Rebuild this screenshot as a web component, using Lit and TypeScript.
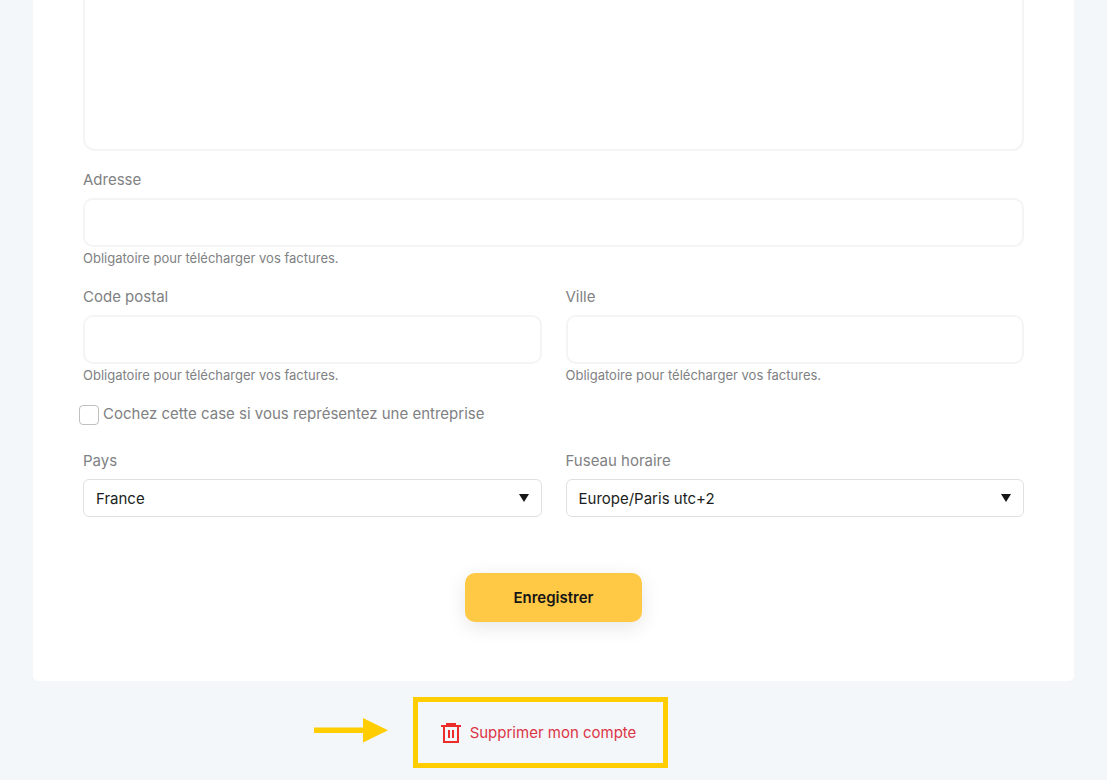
import { LitElement, html, css } from "lit";
import { customElement } from "lit/decorators.js";

@customElement("app-root")
export class AppRoot extends LitElement {
  static styles = css`
    :host {
      display: block;
      min-height: 100vh;
      background: #f3f7fa;
      color: #808183;
      font-family: Inter, "Open Sans", sans-serif;
      font-size: 15px;
      line-height: 24px;
    }
    * {
      box-sizing: border-box;
    }
    .card {
      display: flex;
      flex-direction: column;
      gap: 16px;
      margin: 0 33px;
      padding: 0 50px 59px;
      background: #fff;
      border-radius: 0 0 5px 5px;
    }
    .field {
      display: flex;
      flex-direction: column;
      min-width: 0;
    }
    .row {
      display: grid;
      grid-template-columns: 1fr 1fr;
      gap: 24px;
    }
    .label {
      margin-bottom: 6px;
    }
    .control {
      width: 100%;
      height: 49px;
      padding: 0 16px;
      border: 2px solid #f4f4f4;
      border-radius: 10px;
      background: #fff;
      color: #161616;
      font: inherit;
    }
    .area {
      display: block;
      height: 151px;
      margin-bottom: 1px;
      padding: 16px;
      border-top: 0;
      border-radius: 0 0 12px 12px;
      resize: none;
    }
    .help {
      font-size: 13px;
      line-height: 22px;
    }
    .check {
      display: flex;
      align-items: center;
      gap: 4px;
      margin: 0 0 7px -4px;
    }
    .box {
      flex: none;
      appearance: none;
      width: 20px;
      height: 20px;
      margin: 2px 0 0;
      border: 1px solid #bfbfbf;
      border-radius: 4px;
      background: #fff;
    }
    .box:checked {
      background: #ffc845;
    }
    .pick {
      position: relative;
    }
    .select {
      display: block;
      appearance: none;
      width: 100%;
      height: 38px;
      padding: 2px 32px 0 12px;
      border: 1px solid #dee0e4;
      border-radius: 6px;
      background: #fff;
      color: #1b1e21;
      font: inherit;
    }
    .caret {
      position: absolute;
      top: 15px;
      right: 13px;
      width: 10px;
      height: 8px;
      fill: #161616;
      pointer-events: none;
    }
    .save {
      align-self: center;
      width: 177px;
      height: 49px;
      margin-top: 40px;
      border: 0;
      border-radius: 10px;
      background: #ffc845;
      box-shadow: 0 5px 20px rgba(0, 0, 0, 0.1);
      color: #161616;
      font: inherit;
      font-weight: 600;
    }
    .footer {
      display: flex;
      justify-content: center;
      padding: 16px 26px 12px 0;
    }
    .mark {
      position: relative;
      display: flex;
      padding: 19px 27px 18px 23px;
      border: 5px solid #ffcd00;
    }
    .arrow {
      position: absolute;
      right: calc(100% + 30px);
      top: 16px;
      width: 74px;
      height: 25px;
      fill: #ffcd00;
    }
    .delete {
      display: flex;
      align-items: center;
      gap: 9px;
      color: #dc3545;
      text-decoration: none;
    }
    .trash {
      width: 20px;
      height: 20px;
      fill: #ec2d2a;
    }
  `;

  render() {
    return html`
      <form class="card" @submit=${(e: Event) => e.preventDefault()}>
        <textarea class="control area" aria-label="Informations"></textarea>
        <div class="field">
          <label class="label" for="address">Adresse</label>
          <input class="control" id="address" type="text" aria-describedby="address-help" />
          <span class="help" id="address-help">Obligatoire pour télécharger vos factures.</span>
        </div>
        <div class="row">
          <div class="field">
            <label class="label" for="zip">Code postal</label>
            <input class="control" id="zip" type="text" aria-describedby="zip-help" />
            <span class="help" id="zip-help">Obligatoire pour télécharger vos factures.</span>
          </div>
          <div class="field">
            <label class="label" for="city">Ville</label>
            <input class="control" id="city" type="text" aria-describedby="city-help" />
            <span class="help" id="city-help">Obligatoire pour télécharger vos factures.</span>
          </div>
        </div>
        <div class="check">
          <input class="box" id="company" type="checkbox" />
          <label for="company">Cochez cette case si vous représentez une entreprise</label>
        </div>
        <div class="row">
          <div class="field">
            <label class="label" for="country">Pays</label>
            <div class="pick">
              <select class="select" id="country">
                <option>France</option>
              </select>
              <svg class="caret" viewBox="0 0 10 8" aria-hidden="true"><path d="M0 0h10L5 8z" /></svg>
            </div>
          </div>
          <div class="field">
            <label class="label" for="zone">Fuseau horaire</label>
            <div class="pick">
              <select class="select" id="zone">
                <option>Europe/Paris utc+2</option>
              </select>
              <svg class="caret" viewBox="0 0 10 8" aria-hidden="true"><path d="M0 0h10L5 8z" /></svg>
            </div>
          </div>
        </div>
        <button class="save" type="submit">Enregistrer</button>
      </form>
      <div class="footer">
        <div class="mark">
          <svg class="arrow" viewBox="0 0 74 25" aria-hidden="true">
            <path d="M0 9.5h49V0l25 12.3L49 24.6V15H0z" />
          </svg>
          <a class="delete" href="#supprimer">
            <svg class="trash" viewBox="0 0 20 20" aria-hidden="true">
              <path
                fill-rule="evenodd"
                d="M5 0h10v2h5v2h-2v16H2V4H0V2h5zM4 4v14h12V4zM7 7h2v8H7zM11 7h2v8h-2z"
              />
            </svg>
            Supprimer mon compte
          </a>
        </div>
      </div>
    `;
  }
}
